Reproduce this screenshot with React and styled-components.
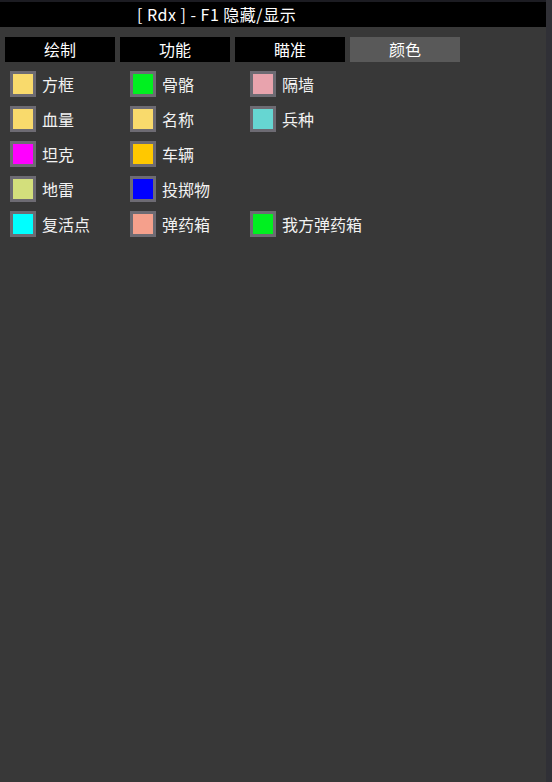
import React from 'react'
import styled, { createGlobalStyle } from 'styled-components'

const Global = createGlobalStyle`
  html, body {
    margin: 0;
    padding: 0;
    background: #383838;
  }
  body {
    font-family: 'Noto Sans CJK SC', 'Noto Sans', sans-serif;
  }
`

const Window = styled.div`
  width: 552px;
  height: 782px;
  background: #383838;
  box-sizing: border-box;
  border-right: 6px solid #303036;
  overflow: hidden;
`

const TitleBar = styled.div`
  height: 27px;
  background: #000;
  border-top: 2px solid #1c1c22;
  box-sizing: border-box;
  color: #fff;
  font-size: 16px;
  letter-spacing: 0.5px;
  line-height: 24px;
  padding-left: 137px;
  white-space: pre;
`

const Tabs = styled.div`
  display: flex;
  gap: 5px;
  padding: 10px 5px 0;
`

const Tab = styled.div`
  width: 110px;
  height: 25px;
  background: ${p => (p.active ? '#595959' : '#000')};
  color: #fff;
  font-size: 16px;
  line-height: 25px;
  text-align: center;
`

const Grid = styled.div`
  display: grid;
  grid-template-columns: repeat(3, 120px);
  grid-auto-rows: 35px;
  padding: 9px 0 0 10px;
`

const Item = styled.div`
  display: flex;
  align-items: center;
  gap: 6px;
  height: 26px;
  grid-column: ${p => p.col};
  grid-row: ${p => p.row};
`

const Swatch = styled.div`
  width: 20px;
  height: 20px;
  border: 3px solid #6d6b73;
  background: ${p => p.color};
  flex-shrink: 0;
`

const Label = styled.span`
  color: #f2f2f2;
  font-size: 16px;
  line-height: 26px;
`

const items = [
  { col: 1, row: 1, label: '方框', color: '#f9da6c' },
  { col: 1, row: 2, label: '血量', color: '#f9da6c' },
  { col: 1, row: 3, label: '坦克', color: '#ff00ff' },
  { col: 1, row: 4, label: '地雷', color: '#d3df7c' },
  { col: 1, row: 5, label: '复活点', color: '#00ffff' },
  { col: 2, row: 1, label: '骨骼', color: '#00f020' },
  { col: 2, row: 2, label: '名称', color: '#f9da6c' },
  { col: 2, row: 3, label: '车辆', color: '#ffc800' },
  { col: 2, row: 4, label: '投掷物', color: '#0000ff' },
  { col: 2, row: 5, label: '弹药箱', color: '#f5a08c' },
  { col: 3, row: 1, label: '隔墙', color: '#e8a3ad' },
  { col: 3, row: 2, label: '兵种', color: '#66d6d2' },
  { col: 3, row: 5, label: '我方弹药箱', color: '#00f020' },
]

const tabs = ['绘制', '功能', '瞄准', '颜色']

export default function App () {
  return (
    <Window>
      <Global />
      <TitleBar>[ Rdx ] - F1 隐藏/显示</TitleBar>
      <Tabs>
        {tabs.map((t, i) => (
          <Tab key={t} active={i === 3}>{t}</Tab>
        ))}
      </Tabs>
      <Grid>
        {items.map(item => (
          <Item key={item.label} col={item.col} row={item.row}>
            <Swatch color={item.color} />
            <Label>{item.label}</Label>
          </Item>
        ))}
      </Grid>
    </Window>
  )
}
